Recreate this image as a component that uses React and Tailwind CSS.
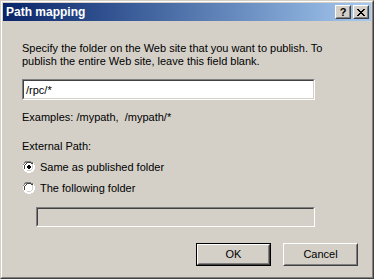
import React from 'react';

const font = { fontFamily: '"Liberation Sans", Arial, sans-serif' };

function Sunken({ className = '', children, disabled }) {
  return (
    <div className={`border border-t-[#808080] border-l-[#808080] border-b-white border-r-white ${className}`}>
      <div
        className={`h-full border border-t-[#404040] border-l-[#404040] border-b-[#d4d0c8] border-r-[#d4d0c8] ${
          disabled ? 'bg-[#d4d0c8]' : 'bg-white'
        }`}
      >
        {children}
      </div>
    </div>
  );
}

function Raised({ className = '', children }) {
  return (
    <div className={`border border-t-white border-l-white border-b-[#404040] border-r-[#404040] ${className}`}>
      <div className="h-full flex items-center justify-center border border-t-[#d4d0c8] border-l-[#d4d0c8] border-b-[#808080] border-r-[#808080] bg-[#d4d0c8]">
        {children}
      </div>
    </div>
  );
}

function Radio({ checked }) {
  return (
    <svg width="12" height="12" viewBox="0 0 12 12" className="shrink-0">
      <path d="M4 0h4v1h2v1h1v2h1v4h-1v2h-1v1h-2v1h-4v-1h-2v-1h-1v-2h-1v-4h1v-2h1v-1h2z" fill="#ffffff" />
      <path d="M4 0h4v1h2v1h-2v-1h-4v1h-2v1h-1v1h1v4h-1v-4h-1v-1h1v-2h1v-1h2z" fill="#808080" />
      <path d="M4 1h4v1h2v1h-2v-1h-4v1h-1v1h-1v4h-1v-4h1v-1h1v-1h1z" fill="#404040" />
      <path d="M10 2h1v2h1v4h-1v2h-1v1h-2v1h-4v-1h-2v-1h2v1h4v-1h2v-2h1v-4h-1z" fill="#ffffff" />
      <path d="M9 3h1v1h0v4h-1v1h-1v1h-4v-1h4v-1h1z" fill="#d4d0c8" />
      {checked && <path d="M5 4h2v1h1v2h-1v1h-2v-1h-1v-2h1z" fill="#000" />}
    </svg>
  );
}

export default function App() {
  return (
    <div
      className="w-[374px] h-[279px] bg-[#d4d0c8] border border-t-[#d4d0c8] border-l-[#d4d0c8] border-b-[#404040] border-r-[#404040] text-[11px] leading-[13px] text-black"
      style={font}
    >
      <div className="h-full border border-t-white border-l-white border-b-[#808080] border-r-[#808080] p-px flex flex-col">
        <div className="h-[18px] flex items-center bg-gradient-to-r from-[#0a246a] to-[#a6caf0] pl-[3px] pr-[2px]">
          <span className="text-white font-bold text-[12px] leading-[14px]">Path mapping</span>
          <div className="ml-auto flex gap-[2px]">
            <Raised className="w-[16px] h-[14px]">
              <span className="font-bold text-[11px] leading-[10px]">?</span>
            </Raised>
            <Raised className="w-[16px] h-[14px]">
              <svg width="8" height="7" viewBox="0 0 8 7">
                <path d="M0 0h2v1h1v1h2v-1h1v-1h2v1h-1v1h-1v1h-1v1h1v1h1v1h1v1h-2v-1h-1v-1h-2v1h-1v1h-2v-1h1v-1h1v-1h1v-1h-1v-1h-1v-1h-1z" fill="#000" />
              </svg>
            </Raised>
          </div>
        </div>

        <div className="pl-[19px] pt-[21px] flex flex-col">
          <p className="whitespace-nowrap">
            Specify the folder on the Web site that you want to publish. To
            <br />
            publish the entire Web site, leave this field blank.
          </p>

          <Sunken className="mt-[11px] w-[293px] h-[21px]">
            <div className="pl-[2px] pt-[3px]">/rpc/*</div>
          </Sunken>

          <p className="mt-[11px]">Examples: /mypath,&nbsp; /mypath/*</p>

          <p className="mt-[16px]">External Path:</p>

          <div className="mt-[8px] flex items-start gap-[5px] pl-[1px] h-[13px]">
            <Radio checked />
            <span>Same as published folder</span>
          </div>
          <div className="mt-[8px] flex items-start gap-[5px] pl-[1px] h-[13px]">
            <Radio />
            <span>The following folder</span>
          </div>

          <Sunken disabled className="mt-[12px] ml-[14px] w-[279px] h-[20px]" />
        </div>

        <div className="mt-auto mb-[10px] flex justify-end gap-[12px] pr-[13px]">
          <div className="w-[75px] h-[23px] border border-black">
            <Raised className="h-full">OK</Raised>
          </div>
          <Raised className="w-[75px] h-[23px]">Cancel</Raised>
        </div>
      </div>
    </div>
  );
}
